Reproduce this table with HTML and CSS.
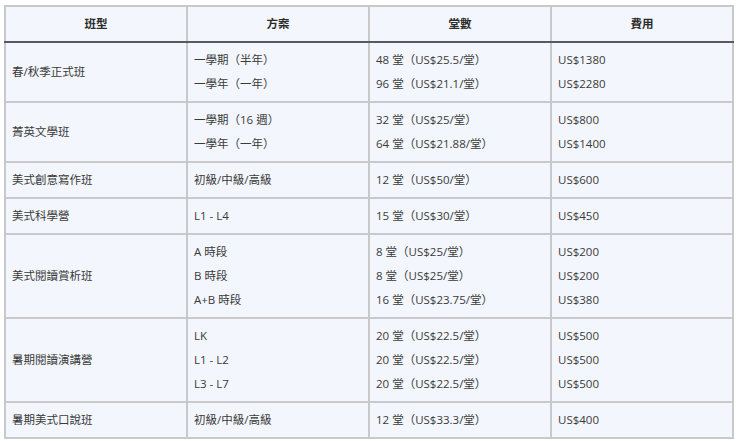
FILE: index.html
```html
<!DOCTYPE html>
<html lang="zh-Hant">
<head>
<meta charset="utf-8">
<link rel="stylesheet" href="styles.css">
</head>
<body>
<table class="fees">
  <thead>
    <tr><th>班型</th><th>方案</th><th>堂數</th><th>費用</th></tr>
  </thead>
  <tbody>
    <tr>
      <td>春/秋季正式班</td>
      <td><div>一學期（半年）</div><div>一學年（一年）</div></td>
      <td><div>48 堂（US$25.5/堂）</div><div>96 堂（US$21.1/堂）</div></td>
      <td><div>US$1380</div><div>US$2280</div></td>
    </tr>
    <tr>
      <td>菁英文學班</td>
      <td><div>一學期（16 週）</div><div>一學年（一年）</div></td>
      <td><div>32 堂（US$25/堂）</div><div>64 堂（US$21.88/堂）</div></td>
      <td><div>US$800</div><div>US$1400</div></td>
    </tr>
    <tr>
      <td>美式創意寫作班</td>
      <td>初級/中級/高級</td>
      <td>12 堂（US$50/堂）</td>
      <td>US$600</td>
    </tr>
    <tr>
      <td>美式科學營</td>
      <td>L1 - L4</td>
      <td>15 堂（US$30/堂）</td>
      <td>US$450</td>
    </tr>
    <tr>
      <td>美式閱讀賞析班</td>
      <td><div>A 時段</div><div>B 時段</div><div>A+B 時段</div></td>
      <td><div>8 堂（US$25/堂）</div><div>8 堂（US$25/堂）</div><div>16 堂（US$23.75/堂）</div></td>
      <td><div>US$200</div><div>US$200</div><div>US$380</div></td>
    </tr>
    <tr>
      <td>暑期閱讀演講營</td>
      <td><div>LK</div><div>L1 - L2</div><div>L3 - L7</div></td>
      <td><div>20 堂（US$22.5/堂）</div><div>20 堂（US$22.5/堂）</div><div>20 堂（US$22.5/堂）</div></td>
      <td><div>US$500</div><div>US$500</div><div>US$500</div></td>
    </tr>
    <tr>
      <td>暑期美式口說班</td>
      <td>初級/中級/高級</td>
      <td>12 堂（US$33.3/堂）</td>
      <td>US$400</td>
    </tr>
  </tbody>
</table>
</body>
</html>
```

FILE: styles.css
```css
html, body {
  margin: 0;
  background: #ffffff;
}
body {
  padding: 5px 6px 0 4px;
  font-family: "Open Sans", "Noto Sans CJK TC", sans-serif;
  font-size: 11.5px;
  color: #3a3a3a;
}
.fees {
  width: 730px;
  border-collapse: collapse;
  table-layout: fixed;
  background: #f3f6fc;
}
.fees th, .fees td {
  border: 2px solid #c9c9c9;
  padding: 5px 6px;
  line-height: 24px;
  text-align: left;
  vertical-align: middle;
}
.fees th {
  text-align: center;
  font-weight: 700;
  color: #2b2b2b;
  border-bottom: 2px solid #5a5a5a;
}
```
